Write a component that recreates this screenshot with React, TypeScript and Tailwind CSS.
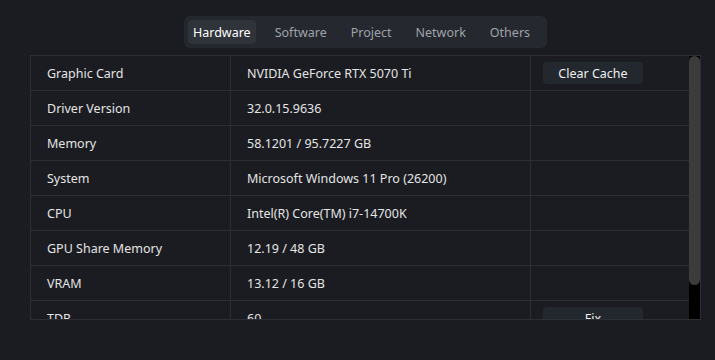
import React from "react";

type Row = {
	label: string;
	value: string;
	action?: string;
};

const tabs = ["Hardware", "Software", "Project", "Network", "Others"];

const rows: Row[] = [
	{ label: "Graphic Card", value: "NVIDIA GeForce RTX 5070 Ti", action: "Clear Cache" },
	{ label: "Driver Version", value: "32.0.15.9636" },
	{ label: "Memory", value: "58.1201 / 95.7227 GB" },
	{ label: "System", value: "Microsoft Windows 11 Pro (26200)" },
	{ label: "CPU", value: "Intel(R) Core(TM) i7-14700K" },
	{ label: "GPU Share Memory", value: "12.19 / 48 GB" },
	{ label: "VRAM", value: "13.12 / 16 GB" },
	{ label: "TDR", value: "60", action: "Fix" },
];

const App: React.FC = () => {
	return (
		<div
			className="w-[715px] h-[360px] bg-[#1b1c21] text-[12.5px] text-[#e4e4e4] flex flex-col pl-[30px] pr-[14px] pt-4 overflow-hidden"
			style={{ fontFamily: '"Noto Sans", "Open Sans", sans-serif' }}>
			<div className="flex justify-center mb-[7px]">
				<div className="flex gap-[14px] bg-[#25282e] rounded-md pl-1 pr-3 py-1">
					{tabs.map((tab, i) => (
						<div
							key={tab}
							className={
								i === 0
									? "px-[5px] h-6 pt-[3px] flex items-center rounded bg-[#2f333a] text-white"
									: "px-[5px] h-6 pt-[3px] flex items-center text-[#9ea3aa]"
							}>
							{tab}
						</div>
					))}
				</div>
			</div>
			<div className="h-[265px] border border-[#2d2f35] flex overflow-hidden">
				<div className="flex-1">
					{rows.map((row) => (
						<div
							key={row.label}
							className="flex h-[35px] border-b border-[#2d2f35] items-center">
							<div className="w-[200px] h-full flex items-center pt-[3px] px-4 border-r border-[#2d2f35]">
								{row.label}
							</div>
							<div className="w-[300px] h-full flex items-center pt-[3px] px-4 border-r border-[#2d2f35]">
								{row.value}
							</div>
							<div className="flex-1 h-full flex items-center pl-3">
								{row.action && (
									<button className="w-[100px] h-[22px] pt-[2px] rounded-sm bg-[#23272e] text-[#f0f0f0]">
										{row.action}
									</button>
								)}
							</div>
						</div>
					))}
				</div>
				<div className="w-[11px] bg-black">
					<div className="h-[229px] bg-[#3c3c3c] rounded-full" />
				</div>
			</div>
		</div>
	);
};

export default App;
